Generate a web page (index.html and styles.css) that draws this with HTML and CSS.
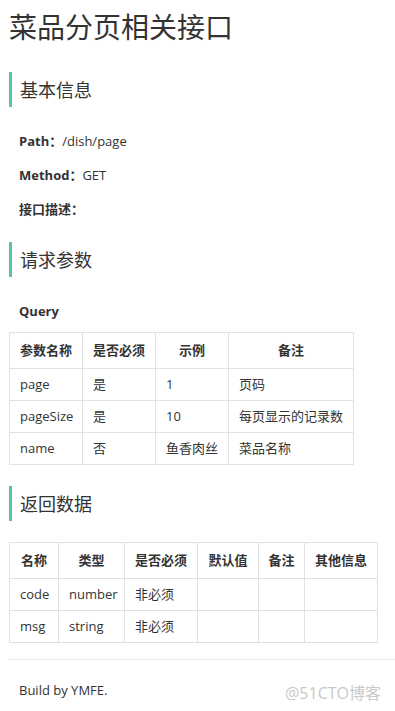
FILE: index.html
```html
<!DOCTYPE html>
<html lang="zh">
<head>
<meta charset="utf-8">
<title>菜品分页相关接口</title>
<link rel="stylesheet" href="styles.css">
</head>
<body>
<div class="page">
  <h1 class="title">菜品分页相关接口</h1>

  <h2 class="section">基本信息</h2>
  <div class="info">
    <p class="info-line"><span class="label">Path：</span><span class="value">/dish/page</span></p>
    <p class="info-line"><span class="label">Method：</span><span class="value">GET</span></p>
    <p class="info-line"><span class="label">接口描述：</span></p>
  </div>

  <h2 class="section section-req">请求参数</h2>
  <p class="sub">Query</p>
  <table class="grid grid-query">
    <colgroup>
      <col class="w73"><col class="w73"><col class="w73"><col class="w125">
    </colgroup>
    <thead>
      <tr><th>参数名称</th><th>是否必须</th><th>示例</th><th>备注</th></tr>
    </thead>
    <tbody>
      <tr><td>page</td><td>是</td><td>1</td><td>页码</td></tr>
      <tr><td>pageSize</td><td>是</td><td>10</td><td>每页显示的记录数</td></tr>
      <tr><td>name</td><td>否</td><td>鱼香肉丝</td><td>菜品名称</td></tr>
    </tbody>
  </table>

  <h2 class="section section-res">返回数据</h2>
  <table class="grid grid-res">
    <colgroup>
      <col class="w49"><col class="w66"><col class="w73"><col class="w61"><col class="w46"><col class="w73">
    </colgroup>
    <thead>
      <tr><th>名称</th><th>类型</th><th>是否必须</th><th>默认值</th><th>备注</th><th>其他信息</th></tr>
    </thead>
    <tbody>
      <tr><td>code</td><td>number</td><td>非必须</td><td></td><td></td><td></td></tr>
      <tr><td>msg</td><td>string</td><td>非必须</td><td></td><td></td><td></td></tr>
    </tbody>
  </table>

  <hr class="rule">
  <p class="footer">Build by YMFE.</p>
</div>
<div class="watermark">@51CTO博客</div>
</body>
</html>
```

FILE: styles.css
```css
html, body {
  margin: 0;
  padding: 0;
  background: #ffffff;
}

body {
  font-family: "Open Sans", "Noto Sans CJK SC", sans-serif;
  font-size: 13px;
  color: #333333;
  position: relative;
  min-height: 711px;
}

.page {
  padding: 0 0 0 9px;
  display: flow-root;
}

.title {
  margin: 9px 0 0 0;
  font-size: 28px;
  line-height: 34px;
  font-weight: normal;
  color: #333333;
  font-family: "Noto Sans CJK SC", sans-serif;
}

.section {
  margin: 29px 0 0 0;
  border-left: 3px solid #59c3a4;
  padding: 0 0 0 8px;
  height: 35px;
  line-height: 35px;
  font-size: 18px;
  font-weight: normal;
  color: #333333;
  font-family: "Noto Sans CJK SC", sans-serif;
}

.section-req {
  margin-top: 23px;
}

.section-res {
  margin-top: 21px;
}

.info {
  margin-top: 24px;
  padding-left: 10px;
  display: flex;
  flex-direction: column;
  gap: 14px;
}

.info-line {
  margin: 0;
  line-height: 20px;
}

.label {
  font-weight: bold;
}

.value {
  margin-left: 0;
}

.sub {
  margin: 24px 0 0 0;
  padding-left: 10px;
  line-height: 20px;
  font-weight: bold;
}

.grid {
  border-collapse: collapse;
  table-layout: fixed;
  margin-top: 11px;
}

.grid-query {
  width: 344px;
}

.grid-res {
  margin-top: 21px;
  width: 368px;
}

.w46 { width: 46px; }
.w49 { width: 49px; }
.w61 { width: 61px; }
.w66 { width: 66px; }
.w73 { width: 73px; }
.w125 { width: 125px; }

.grid th,
.grid td {
  border: 1px solid #e1e1e1;
  line-height: 19px;
  padding: 0 9px 0 10px;
  white-space: nowrap;
  overflow: hidden;
}

.grid th {
  height: 35px;
  text-align: center;
  font-weight: bold;
  padding: 0 4px;
}

.grid td {
  height: 31px;
  text-align: left;
}

.rule {
  margin: 16px 0 0 0;
  border: 0;
  border-top: 1px solid #e6e6e6;
  height: 0;
}

.footer {
  margin: 20px 0 0 0;
  padding-left: 10px;
  line-height: 20px;
}

.watermark {
  position: absolute;
  left: 285px;
  top: 681px;
  font-size: 16px;
  line-height: 24px;
  color: #c9c9c9;
  font-family: "Open Sans", "Noto Sans CJK SC", sans-serif;
}
```
